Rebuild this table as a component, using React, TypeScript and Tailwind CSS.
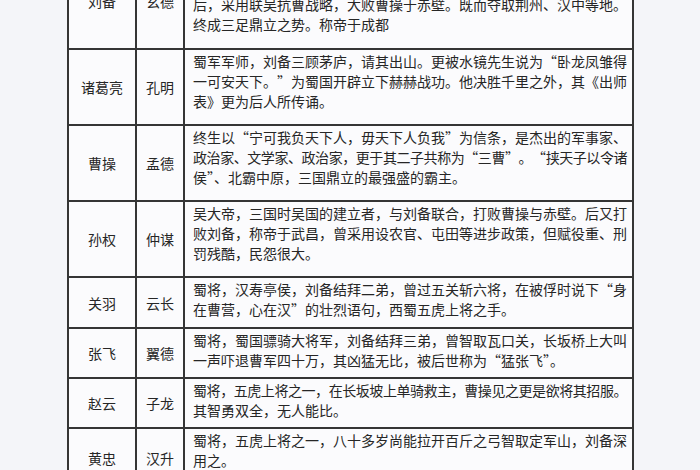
import React from "react";

type Row = { name: string; zi: string; h: string; lines: string[] };

const rows: Row[] = [
  {
    name: "刘备",
    zi: "玄德",
    h: "h-[97px]",
    lines: [
      "涿郡涿县人，汉中山靖王刘胜之后，蜀汉开国皇帝。早年与关羽、张飞",
      "桃园结义，颠沛流离，屡遭挫败。三顾茅庐请出诸葛亮辅佐，赤壁之战",
      "后，采用联吴抗曹战略，大败曹操于赤壁。既而夺取荆州、汉中等地。",
      "终成三足鼎立之势。称帝于成都",
    ],
  },
  {
    name: "诸葛亮",
    zi: "孔明",
    h: "h-[76px]",
    lines: [
      "蜀军军师，刘备三顾茅庐，请其出山。更被水镜先生说为“卧龙凤雏得",
      "一可安天下。”为蜀国开辟立下赫赫战功。他决胜千里之外，其《出师",
      "表》更为后人所传诵。",
    ],
  },
  {
    name: "曹操",
    zi: "孟德",
    h: "h-[76px]",
    lines: [
      "终生以“宁可我负天下人，毋天下人负我”为信条，是杰出的军事家、",
      "政治家、文学家、政治家，更于其二子共称为“三曹”。“挟天子以令诸",
      "侯”、北霸中原，三国鼎立的最强盛的霸主。",
    ],
  },
  {
    name: "孙权",
    zi: "仲谋",
    h: "h-[76px]",
    lines: [
      "吴大帝，三国时吴国的建立者，与刘备联合，打败曹操与赤壁。后又打",
      "败刘备，称帝于武昌，曾采用设农官、屯田等进步政策，但赋役重、刑",
      "罚残酷，民怨很大。",
    ],
  },
  {
    name: "关羽",
    zi: "云长",
    h: "h-[51px]",
    lines: [
      "蜀将，汉寿亭侯，刘备结拜二弟，曾过五关斩六将，在被俘时说下“身",
      "在曹营，心在汉”的壮烈语句，西蜀五虎上将之手。",
    ],
  },
  {
    name: "张飞",
    zi: "翼德",
    h: "h-[50px]",
    lines: [
      "蜀将，蜀国骠骑大将军，刘备结拜三弟，曾智取瓦口关，长坂桥上大叫",
      "一声吓退曹军四十万，其凶猛无比，被后世称为“猛张飞”。",
    ],
  },
  {
    name: "赵云",
    zi: "子龙",
    h: "h-[50px]",
    lines: [
      "蜀将，五虎上将之一，在长坂坡上单骑救主，曹操见之更是欲将其招服。",
      "其智勇双全，无人能比。",
    ],
  },
  {
    name: "黄忠",
    zi: "汉升",
    h: "h-[60px]",
    lines: [
      "蜀将，五虎上将之一，八十多岁尚能拉开百斤之弓智取定军山，刘备深",
      "用之。",
    ],
  },
];

function Line({ text, full }: { text: string; full: boolean }) {
  if (full) {
    return (
      <div className="flex w-[434px] justify-between">
        {Array.from(text).map((c, i) => (
          <span key={i} className="min-w-0 shrink">
            {c}
          </span>
        ))}
      </div>
    );
  }
  return <div className="whitespace-nowrap">{text}</div>;
}

export default function App() {
  return (
    <div
      className="h-[470px] w-[700px] overflow-hidden bg-[#f4f5f9] text-[14px] leading-[20px] text-[#262626]"
      style={{ fontFamily: '"Noto Sans CJK SC", "Noto Sans", sans-serif' }}
    >
      <div className="ml-[67px] mt-[-47px] w-[567px] border-x-2 border-[#353535] bg-[#fbfbfd]">
        {rows.map((r) => (
          <div key={r.name} className={`flex border-b-2 border-[#353535] ${r.h}`}>
            <div className="flex w-[68px] shrink-0 items-center justify-center border-r-2 border-[#353535]">
              {r.name}
            </div>
            <div className="flex w-[48px] shrink-0 items-center justify-center border-r-2 border-[#353535]">
              {r.zi}
            </div>
            <div className="flex-1 pl-[8px] pt-[1px]">
              {r.lines.map((l, i) => (
                <Line key={i} text={l} full={i < r.lines.length - 1} />
              ))}
            </div>
          </div>
        ))}
      </div>
    </div>
  );
}
